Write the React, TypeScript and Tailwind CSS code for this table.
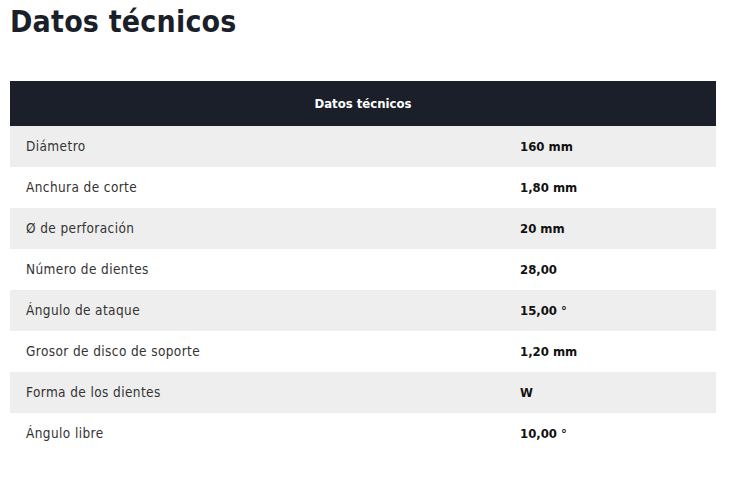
const rows: [string, string][] = [
  ["Diámetro", "160 mm"],
  ["Anchura de corte", "1,80 mm"],
  ["Ø de perforación", "20 mm"],
  ["Número de dientes", "28,00"],
  ["Ángulo de ataque", "15,00 °"],
  ["Grosor de disco de soporte", "1,20 mm"],
  ["Forma de los dientes", "W"],
  ["Ángulo libre", "10,00 °"],
];

export default function App() {
  return (
    <div className="min-h-[480px] w-[735px] bg-white px-[10px] pt-[2px] font-['DejaVu_Sans_Condensed',sans-serif] text-[#1b1f2a]">
      <h1 className="text-[30px] font-bold leading-[40px] tracking-[0.2px]">Datos técnicos</h1>
      <table className="mt-[39px] w-[706px] border-collapse">
        <thead>
          <tr className="h-[45px] bg-[#1b1f2a]">
            <th colSpan={2} className="text-center text-[13px] font-bold text-white">
              Datos técnicos
            </th>
          </tr>
        </thead>
        <tbody>
          {rows.map(([label, value], i) => (
            <tr key={label} className={i % 2 === 0 ? "h-[41px] bg-[#eeeeee]" : "h-[41px] bg-white"}>
              <td className="w-[510px] pl-4 text-[13.5px] tracking-[0.4px] text-[#333]">{label}</td>
              <td className="text-[13px] font-bold text-[#111]">{value}</td>
            </tr>
          ))}
        </tbody>
      </table>
    </div>
  );
}
